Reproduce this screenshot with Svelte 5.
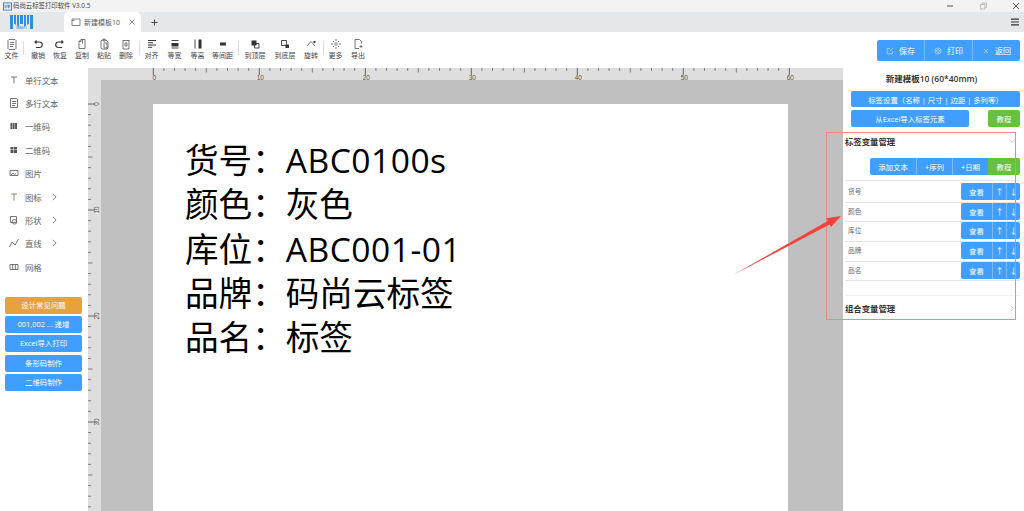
<script>
  const tools = [
    { l: '文件', w: 23, i: 'M3 1.500h6l1 1v8l-1 1H3l-1-1v-8zM4 4.500h4M4 6.500h4M4 8.500h3' },
    { sep: 'a' },
    { l: '撤销', w: 22, i: 'M4.500 2.500 3 4l1.500 1.500M3 4h4.500a2.500 2.500 0 0 1 0 5.500H4', sw: 1.100, dark: true },
    { l: '恢复', w: 22, i: 'M7.500 2.500 9 4 7.500 5.500M9 4H4.500a2.500 2.500 0 0 0 0 5.500H8', sw: 1.100, dark: true },
    { l: '复制', w: 22, i: 'M3 3.500V10.500h6V1.500H5zM5 1.500v2H3M6.500 1.500v4' },
    { l: '粘贴', w: 22, i: 'M4 2h4l2 2v6l-1 1H4L3 10V3zM5 1h2v2H5zM6 5h3v5H6z' },
    { l: '删除', w: 22, i: 'M2.500 2.500h7M3 2.500v8.500h6V2.500M5 5h2v3H5z' },
    { sep: 'b' },
    { l: '对齐', w: 23, i: 'M2 2.500h8M2 4.800h5M2 7h8M2 9.300h4', sw: 1.100, dark: true },
    { l: '等宽', w: 23, i: 'M2.500 2.500h7M2.500 10h7', fill: 'M2.500 5h7v3.500h-7z', dark: true },
    { l: '等高', w: 23, i: 'M3 1.500v9', fill: 'M6.500 1.500h3v9h-3z', dark: true },
    { l: '等间距', w: 27, i: '', fill: 'M3 4.500h6v3H3z' },
    { sep: 'c' },
    { l: '到顶层', w: 30, i: 'M5.500 5.500h4.500v4.500H5.500z', fill: 'M2.500 2.500h5v5h-5z', dark: true },
    { l: '到底层', w: 30, i: 'M2.500 2.500h5v5h-5z', fill: 'M6.500 6.500h3.500v3.500H6.500z', dark: true },
    { l: '旋转', w: 22, i: 'M2 8 6 3.500 10 8', fill: 'M8.500 3h2v2h-2z' },
    { sep: 'd' },
    { l: '更多', w: 23, i: 'M6 1v2M6 9v2M1 6h2M9 6h2M2.800 2.800l1.400 1.400M7.800 7.800l1.400 1.400M9.200 2.800 7.800 4.200M4.200 7.800 2.800 9.200M6 4.500 7.500 6 6 7.500 4.500 6z' },
    { l: '导出', w: 22, i: 'M3 1.500h4.500l2 2v2M3 1.500v9h4M7.500 8.500h3M9 7v3' }
  ];
  const sideItems = [
    { l: '单行文本', i: 'M3 3h6M6 3v6.500', c: 'txt' },
    { l: '多行文本', i: 'M2.500 1.500h6l1 1v8h-7zM4 4.500h4M4 6.500h4M4 8.500h3' },
    { l: '一维码', f: 'M2.500 3h1.800v6H2.500zM4.800 3h1.800v6H4.800zM7.100 3h1.900v6H7.100z' },
    { l: '二维码', f: 'M2.500 3H5.500V5.400H2.500zM6 3H9V5.400H6zM2.500 6H5.500V9H2.500zM6 6H9V9H6z' },
    { l: '图片', i: 'M2 3.500h8v5H2zM3 8l2-2 1.500 1.500L8 6.500' },
    { l: '图标', i: 'M3 3h6M6 3v6.500', more: true, c: 'ora' },
    { l: '形状', i: 'M2.500 2.500h6v6h-6zM6.500 5.500a2.300 2.300 0 1 1 0 4.600 2.300 2.300 0 0 1 0-4.600z', more: true },
    { l: '直线', i: 'M1.500 10 4 5 7 8 10.500 2', more: true },
    { l: '网格', i: 'M2 3.500h8v5H2zM4.700 3.500v5M7.300 3.500v5' }
  ];
  const sideButtons = [
    { l: '设计常见问题', warm: true },
    { l: '001,002 ... 递增' },
    { l: 'Excel导入打印' },
    { l: '条形码制作' },
    { l: '二维码制作' }
  ];
  const vars = ['货号', '颜色', '库位', '品牌', '品名'];
  const lines = [
    { k: '货号：', v: 'ABC0100s', latin: true },
    { k: '颜色：', v: '灰色' },
    { k: '库位：', v: 'ABC001-01', latin: true },
    { k: '品牌：', v: '码尚云标签' },
    { k: '品名：', v: '标签' }
  ];
  const unit = 10.6;
  const topTicks = Array.from({ length: 61 }, (_, n) => ({ n, x: 65.3 + n * unit }));
  const sideTicks = Array.from({ length: 40 }, (_, n) => ({ n, y: 24 + n * unit }));
  const len = (n) => (n % 10 === 0 ? 7 : n % 5 === 0 ? 4.5 : 3);
</script>

<div class="app">
  <header class="titlebar">
    <svg class="appicon" viewBox="0 0 10 10"><rect x="0.500" y="1" width="9" height="8" fill="none" stroke="#2b7fc4"/><path d="M2.500 3v4M4.500 3v3M6 3v4M7.500 3v3" stroke="#2b7fc4"/></svg>
    <span class="apptitle">码尚云标签打印软件 V3.0.5</span>
    <span class="spacer"></span>
    <div class="winctl">
      <svg viewBox="0 0 10 10"><path d="M2 5h6" stroke="#555"/></svg>
      <svg viewBox="0 0 10 10"><path d="M2.500 3.500h4.500v4.500H2.500zM4 3.500V2h4.500v4.500H7" fill="none" stroke="#bbb"/></svg>
      <svg viewBox="0 0 10 10"><path d="M2 2l6 6M8 2l-6 6" stroke="#555"/></svg>
    </div>
  </header>

  <nav class="tabbar">
    <svg class="logo" viewBox="0 0 23 14">
      <path d="M0 0h3v14H0zM20 0h3v14h-3z" fill="#2f8fd8"/>
      <path d="M4 0h2v10L4 8.500zM7 0h2v12L7 10.500zM10 0h3v9h-3zM14 0h2v10.500L14 12zM17 0h2v8.500L17 10z" fill="#2f8fd8"/>
      <text x="11.500" y="13.500" text-anchor="middle" class="logotext">MASO</text>
    </svg>
    <div class="tab">
      <svg class="tabicon" viewBox="0 0 10 10"><path d="M1 2h8v6.500H1zM1 3.500h2.500" fill="none" stroke="#666" stroke-width="0.800"/></svg>
      <span>新建模板10</span>
      <svg class="tabx" viewBox="0 0 8 8"><path d="M1.500 1.500l5 5M6.500 1.500l-5 5" stroke="#666" stroke-width="0.800"/></svg>
    </div>
    <svg class="plus" viewBox="0 0 8 8"><path d="M4 .5v7M.5 4h7" stroke="#333" stroke-width="1"/></svg>
    <span class="spacer"></span>
    <svg class="burger" viewBox="0 0 10 8"><path d="M1 1.200h8M1 4h8M1 6.800h8" stroke="#333" stroke-width="1.200"/></svg>
  </nav>

  <section class="toolbar">
    {#each tools as t}
      {#if t.sep}
        <span class="tsep {t.sep}"></span>
      {:else}
        <div class="tool" style="width:{t.w}px">
          <svg viewBox="0 0 12 12">
            {#if t.i}<path d={t.i} fill="none" stroke={t.dark ? '#333' : '#666'} stroke-width={t.sw ?? 0.900}/>{/if}
            {#if t.fill}<path d={t.fill} fill="#333"/>{/if}
          </svg>
          <span>{t.l}</span>
        </div>
      {/if}
    {/each}
    <span class="spacer"></span>
    <div class="actions">
      <button class="act">
        <svg viewBox="0 0 10 10"><path d="M8 5.500V8.500H1.500V2H5M4.500 5.500 8.500 1.500" fill="none" stroke="#cfe6ff" stroke-width="0.800"/></svg>保存
      </button>
      <button class="act">
        <svg viewBox="0 0 10 10"><circle cx="5" cy="5" r="3.800" fill="none" stroke="#cfe6ff" stroke-width="0.800"/><circle cx="5" cy="5" r="1.800" fill="none" stroke="#cfe6ff" stroke-width="0.800"/></svg>打印
      </button>
      <button class="act">
        <svg viewBox="0 0 10 10"><path d="M2.500 2.500l5 5M7.500 2.500l-5 5" stroke="#cfe6ff" stroke-width="0.800"/></svg>返回
      </button>
    </div>
  </section>

  <main class="body">
    <aside class="side">
      <ul class="menu">
        {#each sideItems as s}
          <li>
            <svg viewBox="0 0 12 12">
              {#if s.i}<path d={s.i} fill="none" stroke={s.c === 'ora' ? '#8a7a55' : '#666'} stroke-width="0.900"/>{/if}
              {#if s.f}<path d={s.f} fill="#555"/>{/if}
            </svg>
            <span>{s.l}</span>
            {#if s.more}
              <svg class="chev" viewBox="0 0 6 10"><path d="M1 1l4 4-4 4" fill="none" stroke="#555" stroke-width="0.900"/></svg>
            {/if}
          </li>
        {/each}
      </ul>
      <div class="sidebtns">
        {#each sideButtons as b}
          <button class="sb" class:warm={b.warm}>{b.l}</button>
        {/each}
      </div>
    </aside>

    <div class="work">
      <svg class="rtop" viewBox="0 0 755 12">
        {#each topTicks as t}
          <line x1={t.x} x2={t.x} y1="0" y2={len(t.n)} stroke={t.n % 10 === 0 ? '#444' : '#666'} stroke-width="0.800"/>
          {#if t.n % 10 === 0}
            <text x={t.x + 1} y="11.500" text-anchor="middle" class="rnum">{t.n}</text>
          {/if}
        {/each}
      </svg>
      <div class="workrow">
        <svg class="rside" viewBox="0 0 13 431">
          {#each sideTicks as t}
            <line x1="0" x2={len(t.n)} y1={t.y} y2={t.y} stroke={t.n % 10 === 0 ? '#444' : '#666'} stroke-width="0.800"/>
            {#if t.n % 10 === 0}
              <text x="0" y="0" transform="translate(11 {t.y}) rotate(-90)" text-anchor="middle" class="rnum">{t.n}</text>
            {/if}
          {/each}
        </svg>
        <div class="canvas">
          <div class="page">
            {#each lines as line}
              <div class="pline">{line.k}<span class:latin={line.latin}>{line.v}</span></div>
            {/each}
          </div>
        </div>
      </div>
    </div>

    <aside class="panel">
      <h1>新建模板10 (60*40mm)</h1>
      <button class="pbtn wide">标签设置（名称 | 尺寸 | 边距 | 多列等）</button>
      <div class="prow">
        <button class="pbtn excel">从Excel导入标签元素</button>
        <button class="pbtn green">教程</button>
      </div>
      <div class="acchead first">
        <h2>标签变量管理</h2>
        <svg viewBox="0 0 10 6"><path d="M1 1l4 4 4-4" fill="none" stroke="#888" stroke-width="0.800"/></svg>
      </div>
      <div class="vgroup">
        <button class="seg s1">添加文本</button>
        <button class="seg s2">+序列</button>
        <button class="seg s2">+日期</button>
        <button class="seg s3">教程</button>
      </div>
      <div class="vars">
        {#each vars as v}
          <div class="vrow">
            <span>{v}</span>
            <div class="vbtns">
              <button class="vb look">查看</button>
              <button class="vb arr">↑</button>
              <button class="vb arr">↓</button>
            </div>
          </div>
        {/each}
      </div>
      <div class="acchead combo">
        <h2>组合变量管理</h2>
        <svg class="right" viewBox="0 0 6 10"><path d="M1 1l4 4-4 4" fill="none" stroke="#999" stroke-width="0.800"/></svg>
      </div>
    </aside>
  </main>

  <div class="redbox"></div>
  <svg class="arrow" viewBox="0 0 120 70">
    <path d="M1 66 95.700 11.900 94.300 9.300 109 7 99 18 97.700 15.500z" fill="#f4433c"/>
  </svg>
</div>

<style>
  :global(body) { margin: 0; background: #fff; }
  .app {
    position: relative;
    width: 1024px;
    height: 511px;
    overflow: hidden;
    display: flex;
    flex-direction: column;
    background: #fff;
    font-family: "Open Sans", "Noto Sans CJK SC", sans-serif;
    color: #333;
  }
  button { border: 0; padding: 0; margin: 0; font-family: inherit; color: #fff; background: #409eff; }
  .spacer { flex: 1; }

  .titlebar { height: 12px; background: #f3f3f3; display: flex; align-items: center; padding-left: 3px; }
  .appicon { width: 9px; height: 9px; margin-right: 1px; }
  .apptitle { font-size: 6.400px; line-height: 12px; color: #444; }
  .winctl { display: flex; gap: 15px; margin-right: 3px; }
  .winctl svg { width: 10px; height: 10px; margin-left: 8px; }

  .tabbar { height: 20px; background: #e5e8eb; display: flex; align-items: center; }
  .logo { width: 23px; height: 14px; margin-left: 10px; }
  .logotext { font-size: 3.500px; fill: #2f8fd8; font-family: "Liberation Sans", sans-serif; }
  .tab {
    width: 77px;
    height: 20px;
    margin-left: 31px;
    background: #fff;
    border-radius: 5px 5px 0 0;
    display: flex;
    align-items: center;
    box-sizing: border-box;
    padding-left: 7px;
    font-size: 7px;
    color: #555;
  }
  .tabicon { width: 10px; height: 10px; margin-right: 3px; }
  .tabx { width: 8px; height: 8px; margin-left: 8px; }
  .plus { width: 7px; height: 7px; margin-left: 10px; }
  .burger { width: 10px; height: 8px; margin-right: 4px; }

  .toolbar { height: 36px; display: flex; align-items: flex-start; }
  .tool { display: flex; flex-direction: column; align-items: center; height: 36px; padding-top: 6px; box-sizing: border-box; flex: none; }
  .tool svg { width: 12px; height: 12px; }
  .tool span { font-size: 7px; line-height: 9px; margin-top: 1px; color: #444; white-space: nowrap; }
  .tsep { width: 1px; height: 14px; background: #ddd; margin-top: 9px; flex: none; }
  .tsep.a { margin-right: 3px; }
  .tsep.b { margin-left: 2px; }
  .tsep.c { margin-left: 2px; margin-right: 1px; }
  .tsep.d { margin-left: 1px; }
  .actions { display: flex; margin: 8px 4px 0 0; border-radius: 2px; overflow: hidden; }
  .act {
    width: 48px;
    height: 21px;
    font-size: 8px;
    display: flex;
    align-items: center;
    justify-content: center;
    gap: 5px;
    border-left: 1px solid #79bbff;
  }
  .act:first-child { border-left: 0; width: 47px; }
  .act svg { width: 8px; height: 8px; }

  .body { flex: 1; display: flex; min-height: 0; }
  .side { width: 88px; flex: none; }
  .menu { list-style: none; margin: 0; padding: 0; }
  .menu li {
    height: 23.400px;
    display: flex;
    align-items: center;
    padding-left: 8px;
    font-size: 8.400px;
    color: #666;
  }
  .menu li svg { width: 12px; height: 12px; margin-right: 5px; flex: none; }
  .menu li .chev { width: 5px; height: 8px; margin: 0 0 0 10px; }
  .sidebtns { display: flex; flex-direction: column; gap: 2.200px; padding: 18.600px 6px 0 5px; }
  .sb { height: 17px; border-radius: 2px; font-size: 7.400px; line-height: 17px; }
  .warm { background: #e6a23c; }

  .work { width: 755px; flex: none; display: flex; flex-direction: column; min-height: 0; }
  .rtop { width: 755px; height: 12px; background: #dedede; display: block; flex: none; }
  .workrow { flex: 1; display: flex; min-height: 0; }
  .rside { width: 13px; height: 431px; background: #dedede; display: block; flex: none; }
  .rnum { font-size: 6.500px; fill: #555; font-family: "Liberation Sans", sans-serif; }
  .canvas { flex: 1; background: #c0c0c0; padding: 24px 55px 0 52px; min-height: 0; overflow: hidden; }
  .page { height: 100%; background: #fff; padding: 34px 0 0 32px; box-sizing: border-box; overflow: hidden; }
  .pline { font-size: 33.600px; line-height: 44.300px; color: #000; white-space: nowrap; }
  .latin { letter-spacing: 0.500px; }

  .panel { flex: 1; min-width: 0; box-sizing: border-box; padding: 0 4px 0 8px; }
  h1 { margin: 0 8px 0 0; font-size: 8.500px; font-weight: 600; text-align: center; line-height: 12px; padding-top: 5px; color: #333; height: 23px; box-sizing: border-box; }
  .pbtn { font-size: 7.400px; height: 17px; border-radius: 2px; display: block; }
  .wide { width: 100%; height: 16px; }
  .prow { display: flex; justify-content: space-between; margin-top: 3px; }
  .excel { width: 118px; }
  .green { width: 32px; background: #67c23a; }
  .acchead { display: flex; align-items: center; justify-content: space-between; margin-left: -6px; height: 31px; }
  .acchead.first { padding-bottom: 3px; box-sizing: border-box; }
  h2 { margin: 0; font-size: 8.400px; font-weight: 700; color: #333; }
  .acchead svg { width: 6px; height: 4px; margin-right: 5px; }
  .acchead svg.right { width: 4px; height: 7px; margin-right: 6px; }
  .vgroup { display: flex; margin-left: 19px; height: 17px; border-radius: 2px; overflow: hidden; }
  .seg { font-size: 7.400px; height: 17px; border-left: 1px solid #79bbff; }
  .s1 { width: 46px; border-left: 0; }
  .s2 { width: 36px; }
  .s3 { width: 32px; background: #67c23a; border-left: 0; }
  .vars { margin-top: 5px; border-top: 1px solid #e4e4e4; margin-left: -6px; padding-top: 2px; }
  .vrow {
    height: 19.650px;
    box-sizing: border-box;
    border-bottom: 1px solid #e4e4e4;
    display: flex;
    align-items: flex-start;
    justify-content: space-between;
    padding-left: 3px;
    font-size: 6.700px;
    line-height: 17px;
    color: #666;
  }
  .vbtns { display: flex; height: 17px; border-radius: 2px; overflow: hidden; }
  .vb { height: 17px; font-size: 7.400px; }
  .look { width: 31px; }
  .arr { width: 14px; border-left: 1px solid #79bbff; font-size: 8px; }
  .combo { border-top: 1px solid #f0f0f0; margin-top: 14px; height: 24px; }

  .redbox {
    position: absolute;
    left: 826px;
    top: 132px;
    width: 190px;
    height: 188px;
    box-sizing: border-box;
    border: 1px solid #e98a8a;
    pointer-events: none;
  }
  .arrow { position: absolute; left: 732px; top: 209px; width: 120px; height: 70px; pointer-events: none; }
</style>
